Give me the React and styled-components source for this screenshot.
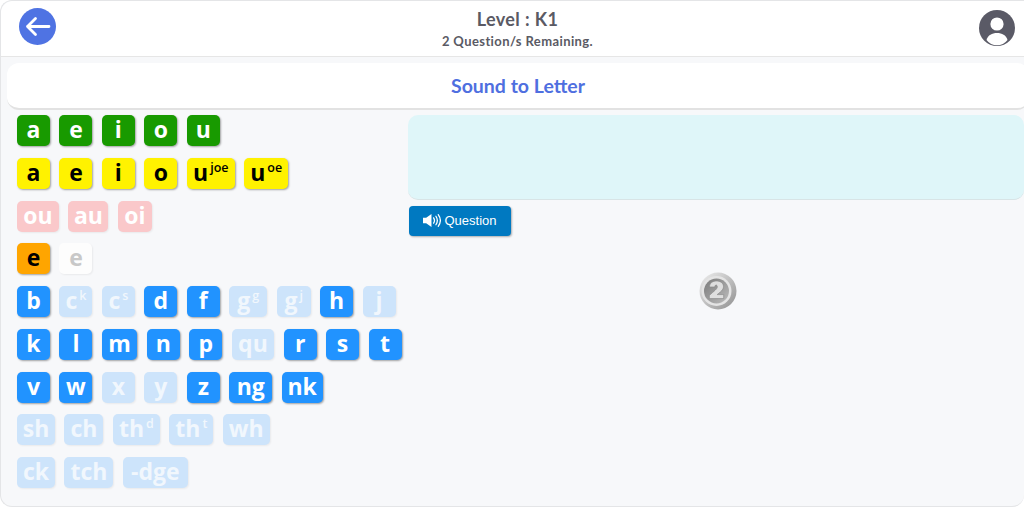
import React from 'react'
import styled, { createGlobalStyle } from 'styled-components'

const GlobalStyle = createGlobalStyle`
  html, body {
    margin: 0;
    padding: 0;
    background: #fff;
  }
  * {
    box-sizing: border-box;
  }
`

const Page = styled.div`
  width: 1024px;
  height: 507px;
  overflow: hidden;
  background: #f7f8fa;
  border: 1px solid #e4e5e7;
  border-right: none;
  border-radius: 12px 0 12px 12px;
  font-family: 'Open Sans', 'Noto Sans', sans-serif;
`

const Header = styled.header`
  height: 56px;
  display: flex;
  align-items: center;
  justify-content: space-between;
  padding: 0 8px 4px 18px;
  background: #fff;
  border-bottom: 1px solid #e6e6e6;
  border-radius: 12px 0 0 0;
`

const IconButton = styled.div`
  width: 37px;
  height: 37px;
  flex: none;
  margin-top: ${(p) => p.$drop || 0}px;
`

const HeaderText = styled.div`
  display: flex;
  flex-direction: column;
  align-items: center;
  color: #5a5a64;
  font-family: Lato, 'Open Sans', sans-serif;
  font-weight: 700;
  margin-top: 3px;
`

const Level = styled.div`
  font-size: 18px;
  line-height: 24px;
  letter-spacing: 0.4px;
`

const Remaining = styled.div`
  font-size: 13px;
  line-height: 18px;
  margin-top: 1px;
  letter-spacing: 0.4px;
`

const TitleCard = styled.div`
  height: 47px;
  margin: 6px -5px 0 6px;
  display: flex;
  align-items: center;
  justify-content: center;
  background: #fff;
  border-radius: 12px;
  border-bottom: 2px solid #e2e2e2;
  color: #4f6fe0;
  font-family: Lato, 'Open Sans', sans-serif;
  font-size: 19.5px;
  font-weight: 700;
`

const Body = styled.div`
  display: flex;
  padding: 5px 0 0 16px;
`

const Letters = styled.div`
  width: 391px;
  flex: none;
  display: flex;
  flex-direction: column;
  gap: 11.75px;
`

const Row = styled.div`
  display: flex;
  gap: 9.45px;
`

const palette = {
  green: { bg: '#189a00', fg: '#fff' },
  yellow: { bg: '#fff200', fg: '#000' },
  pink: { bg: '#fac8ca', fg: '#fff' },
  orange: { bg: '#ffa500', fg: '#000' },
  ghost: { bg: '#fdfdfd', fg: '#c8c8c8' },
  blue: { bg: '#2193ff', fg: '#fff' },
  pale: { bg: '#cde4fb', fg: '#f1f7fd' },
}

const Tile = styled.div`
  width: ${(p) => p.$w || 33}px;
  height: 31px;
  flex: none;
  display: flex;
  align-items: center;
  justify-content: center;
  border-radius: 5px;
  background: ${(p) => palette[p.$kind].bg};
  color: ${(p) => palette[p.$kind].fg};
  box-shadow: ${(p) =>
    p.$kind === 'pale' || p.$kind === 'pink' || p.$kind === 'ghost'
      ? '1px 1px 2px rgba(0, 0, 0, 0.06)'
      : '1px 1px 2px rgba(0, 0, 0, 0.35)'};
  font-size: 23px;
  font-weight: 700;
  line-height: 1;
  padding-bottom: 2px;
`

const Sup = styled.span`
  font-size: 12.5px;
  font-weight: 600;
  margin: -9px 0 0 2px;
`

const Side = styled.div`
  flex: 1;
  min-width: 0;
  display: flex;
  flex-direction: column;
  align-items: flex-start;
`

const PromptBox = styled.div`
  width: 100%;
  height: 85px;
  background: #dff6f9;
  border-radius: 10px;
  border-bottom: 1px solid #d8e4e6;
`

const QuestionButton = styled.button`
  margin: 6px 0 0 1px;
  width: 102px;
  height: 30px;
  display: flex;
  align-items: center;
  justify-content: center;
  gap: 3px;
  padding: 0 0 2px;
  border: none;
  border-radius: 4px;
  background: #0079c1;
  box-shadow: 1px 1px 2px rgba(0, 0, 0, 0.3);
  color: #fff;
  font-family: 'Liberation Sans', Arial, sans-serif;
  font-size: 13px;
`

const CoinSlot = styled.div`
  width: 100%;
  display: flex;
  justify-content: center;
  margin-top: 35px;
  padding-left: 4px;
`

const rows = [
  [['a', 'green'], ['e', 'green'], ['i', 'green'], ['o', 'green'], ['u', 'green']],
  [
    ['a', 'yellow'], ['e', 'yellow'], ['i', 'yellow'], ['o', 'yellow'],
    ['u', 'yellow', 48, 'joe'], ['u', 'yellow', 44, 'oe'],
  ],
  [['ou', 'pink', 42], ['au', 'pink', 40], ['oi', 'pink', 34]],
  [['e', 'orange'], ['e', 'ghost']],
  [
    ['b', 'blue'], ['c', 'pale', 33, 'k'], ['c', 'pale', 33, 's'], ['d', 'blue'], ['f', 'blue'],
    ['g', 'pale', 38, 'g'], ['g', 'pale', 34, 'j'], ['h', 'blue'], ['j', 'pale'],
  ],
  [
    ['k', 'blue'], ['l', 'blue'], ['m', 'blue', 35.5], ['n', 'blue'], ['p', 'blue'],
    ['qu', 'pale', 42.5], ['r', 'blue'], ['s', 'blue'], ['t', 'blue'],
  ],
  [
    ['v', 'blue'], ['w', 'blue'], ['x', 'pale'], ['y', 'pale'], ['z', 'blue'],
    ['ng', 'blue', 43], ['nk', 'blue', 41],
  ],
  [
    ['sh', 'pale', 38], ['ch', 'pale', 39], ['th', 'pale', 47, 'd'],
    ['th', 'pale', 44, 't'], ['wh', 'pale', 47],
  ],
  [['ck', 'pale', 38], ['tch', 'pale', 49], ['-dge', 'pale', 65]],
]

function BackIcon() {
  return (
    <svg viewBox="0 0 37 37" width="37" height="37">
      <circle cx="18.5" cy="18.5" r="18.5" fill="#4f73e3" />
      <path
        d="M30 18.5H8.500M16.500 10.500l-8 8 8 8"
        fill="none"
        stroke="#fff"
        strokeWidth="2.8"
        strokeLinecap="round"
        strokeLinejoin="round"
      />
    </svg>
  )
}

function UserIcon() {
  return (
    <svg viewBox="0 0 36 36" width="36" height="36">
      <circle cx="18" cy="18" r="18" fill="#5a5a66" />
      <circle cx="18" cy="14" r="6.6" fill="#fff" />
      <path d="M7.500 30c1.500-5 5.500-7 10.500-7s9 2 10.500 7a13 13 0 0 1-21 0z" fill="#fff" />
    </svg>
  )
}

function SpeakerIcon() {
  return (
    <svg viewBox="0 0 17 14" width="18" height="15">
      <path d="M0 4.500h3L8 .8v12.400L3 9.500H0z" fill="#fff" />
      <path
        d="M10 4.500c1 1.500 1 3.500 0 5M12.200 3c1.700 2.500 1.700 5.500 0 8M14.400 1.500c2.400 3.300 2.400 7.700 0 11"
        fill="none"
        stroke="#fff"
        strokeWidth="1.2"
        strokeLinecap="round"
      />
    </svg>
  )
}

function Coin() {
  return (
    <svg viewBox="0 0 40 40" width="40" height="40">
      <defs>
        <linearGradient id="rim" x1="0" y1="0" x2="1" y2="1">
          <stop offset="0" stopColor="#f0f0f0" />
          <stop offset="1" stopColor="#8f8f8f" />
        </linearGradient>
        <linearGradient id="face" x1="0" y1="0" x2="1" y2="1">
          <stop offset="0" stopColor="#7a7a7a" />
          <stop offset="1" stopColor="#bdbdbd" />
        </linearGradient>
      </defs>
      <circle cx="20" cy="20" r="18.500" fill="url(#rim)" />
      <circle cx="18.500" cy="20" r="15" fill="#e4e4e4" />
      <circle cx="18.500" cy="20" r="12.500" fill="url(#face)" />
      <path
        d="M11.500 16c0-3.800 3-6 7-6s7 2.200 7 5.600c0 3.400-3 5.200-6.300 8h6.500v4H11.300v-3.200c4.800-4.400 8-6.500 8-8.500 0-1.100-.4-1.800-1.200-1.800-.9 0-1.300.9-1.300 1.900z"
        fill="#dedede"
        stroke="#8a8a8a"
        strokeWidth="0.7"
      />
    </svg>
  )
}

export default function App() {
  return (
    <>
      <GlobalStyle />
      <Page>
        <Header>
          <IconButton>
            <BackIcon />
          </IconButton>
          <HeaderText>
            <Level>Level : K1</Level>
            <Remaining>2 Question/s Remaining.</Remaining>
          </HeaderText>
          <IconButton $drop={4}>
            <UserIcon />
          </IconButton>
        </Header>
        <TitleCard>Sound to Letter</TitleCard>
        <Body>
          <Letters>
            {rows.map((row, i) => (
              <Row key={i}>
                {row.map(([label, kind, w, sup], j) => (
                  <Tile key={j} $kind={kind} $w={w}>
                    {label}
                    {sup && <Sup>{sup}</Sup>}
                  </Tile>
                ))}
              </Row>
            ))}
          </Letters>
          <Side>
            <PromptBox />
            <QuestionButton>
              <SpeakerIcon />
              Question
            </QuestionButton>
            <CoinSlot>
              <Coin />
            </CoinSlot>
          </Side>
        </Body>
      </Page>
    </>
  )
}
